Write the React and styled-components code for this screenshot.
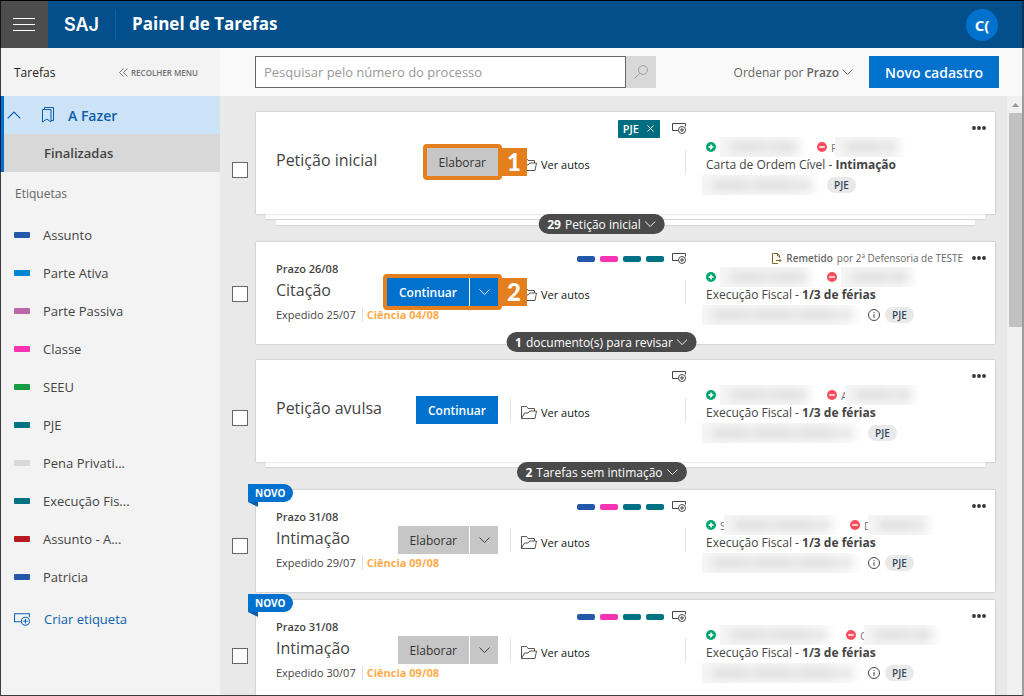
import { useState } from "react";
import styled, { createGlobalStyle, css } from "styled-components";

const GlobalStyle = createGlobalStyle`
  * {
    box-sizing: border-box;
  }
  body {
    margin: 0;
    font-family: "Segoe UI", "Open Sans", "Noto Sans", sans-serif;
    font-size: 13px;
    color: #444;
    background-color: #e9e9e9;
  }
  button, input, select {
    font-family: inherit;
    font-size: inherit;
    color: inherit;
    margin: 0;
    padding: 0;
    border: none;
    border-radius: 0;
    background: none;
  }
  button {
    cursor: pointer;
  }
  a {
    color: inherit;
    text-decoration: none;
  }
  ul {
    list-style: none;
    margin: 0;
    padding: 0;
  }
  svg {
    display: block;
    flex: none;
    fill: none;
    stroke: currentColor;
  }
`;

const Page = styled.div`
  height: 100vh;
  display: flex;
  flex-direction: column;
  overflow: hidden;
  border-top: 1px solid #000;
`;

const Frame = styled.div`
  position: fixed;
  inset: 0;
  z-index: 10;
  pointer-events: none;
  border: 1px solid rgba(0, 0, 0, 0.75);
  border-top: none;
  border-right: 2px solid rgba(0, 0, 0, 0.35);
`;

/* header */

const Header = styled.header`
  flex: none;
  height: 47px;
  display: flex;
  align-items: center;
  background-color: #034f8c;
  color: white;
`;

const MenuButton = styled.button`
  width: 48px;
  align-self: stretch;
  display: flex;
  align-items: center;
  justify-content: center;
  background-color: #4d4d4d;
`;

const Logo = styled.span`
  padding: 0 16px;
  line-height: 30px;
  border-right: 1px solid #0460ab;
  font-family: Inter, "Liberation Sans", sans-serif;
  font-size: 18px;
  font-weight: 600;
`;

const PageTitle = styled.h1`
  flex: 1;
  margin: 0 16px;
  font-size: 17px;
  line-height: 22px;
  padding-bottom: 2px;
  font-weight: 700;
`;

const Avatar = styled.button`
  width: 32px;
  height: 32px;
  margin-right: 26px;
  border-radius: 50%;
  background-color: #0072ce;
  font-size: 15px;
  font-weight: 700;
`;

const Body = styled.div`
  flex: 1;
  min-height: 0;
  display: flex;
`;

/* sidebar */

const Sidebar = styled.nav`
  flex: none;
  width: 220px;
  background-color: #f3f3f3;
`;

const SidebarTop = styled.div`
  height: 48px;
  padding: 0 22px 0 14px;
  display: flex;
  align-items: center;
  justify-content: space-between;
  font-size: 12px;
  color: #222;
`;

const Collapse = styled.button`
  display: flex;
  align-items: center;
  gap: 3px;
  font-size: 8px;
  font-weight: 600;
  color: #707070;
`;

const Group = styled.div`
  border-left: 4px solid #0072ce;
`;

const GroupLink = styled.a`
  height: 38px;
  display: flex;
  align-items: center;
  font-weight: 600;
  ${(props) =>
    props.$active
      ? css`
          padding-left: 3px;
          font-size: 14px;
          color: #0b5cab;
          background-color: #cce3f7;
        `
      : css`
          padding-left: 40px;
          background-color: #d8d8d8;
        `}
`;

const BookmarkSlot = styled.span`
  padding: 0 13px 0 20px;
`;

const SidebarTitle = styled.h2`
  margin: 0;
  padding: 0 15px;
  font-size: 12px;
  font-weight: 400;
  line-height: 44px;
  color: #666;
`;

const LabelItem = styled.li`
  height: 38px;
  padding-left: 14px;
  display: flex;
  align-items: center;
  gap: 13px;
`;

const LabelName = styled.span`
  white-space: nowrap;
`;

const Swatch = styled.span`
  width: 16px;
  height: 6px;
  border-radius: 1px;
  background-color: ${(props) => props.$color};
`;

const CreateLabel = styled.button`
  height: 46px;
  padding-left: 14px;
  display: flex;
  align-items: center;
  gap: 14px;
  color: #0b62b0;
`;

/* toolbar */

const Content = styled.main`
  flex: 1;
  min-width: 0;
  display: flex;
  flex-direction: column;
`;

const Toolbar = styled.div`
  flex: none;
  height: 48px;
  padding: 0 25px 0 35px;
  display: flex;
  align-items: center;
  background-color: #f9f9f9;
`;

const SearchForm = styled.form`
  flex: 0 1 401px;
  height: 32px;
  display: flex;
  margin-right: auto;
`;

const SearchInput = styled.input`
  flex: 1;
  min-width: 0;
  padding: 0 8px;
  border: 1px solid #666;
  background-color: white;
  &::placeholder {
    color: #999;
    opacity: 1;
  }
`;

const SearchButton = styled.button`
  width: 30px;
  display: flex;
  align-items: center;
  justify-content: center;
  color: #a0a0a0;
  background-color: #d8d8d8;
`;

const Sort = styled.label`
  display: flex;
  align-items: center;
  gap: 3px;
  margin-right: 16px;
  font-size: 12px;
  color: #666;
`;

const SortSelect = styled.select`
  appearance: none;
  field-sizing: content;
  font-weight: 600;
`;

const NewButton = styled.button`
  width: 130px;
  height: 32px;
  font-size: 14px;
  font-weight: 600;
  color: white;
  background-color: #0072ce;
`;

/* task list */

const ListArea = styled.div`
  flex: 1;
  min-height: 0;
  display: flex;
`;

const TaskList = styled.ul`
  flex: 1;
  min-width: 0;
  overflow: hidden;
  padding: 16px 12px 0;
`;

const itemMargins = { stack: 28, new: 8 };
const checkMargins = { stack: 14, new: 10 };

const TaskItem = styled.li`
  display: flex;
  align-items: center;
  gap: 8px;
  margin-bottom: ${(props) => itemMargins[props.$kind] || 16}px;
`;

const Check = styled.input`
  appearance: none;
  flex: none;
  width: 16px;
  height: 16px;
  margin-top: ${(props) => checkMargins[props.$kind] || 2}px;
  border: 1px solid #666;
  background-color: white;
  &:checked {
    background-color: #0072ce;
  }
`;

const CardWrap = styled.div`
  position: relative;
  flex: 1;
  min-width: 0;
`;

const Card = styled.article`
  position: relative;
  min-height: 102px;
  padding-bottom: 2px;
  display: grid;
  grid-template-columns: 430px minmax(0, 1fr);
  background-color: white;
  box-shadow: 0 0 2px rgba(0, 0, 0, 0.25);
`;

const Layer = styled.div`
  position: absolute;
  top: calc(100% + ${(props) => (props.$depth - 1) * 6}px);
  left: ${(props) => props.$depth * 10}px;
  right: ${(props) => props.$depth * 10}px;
  height: 5px;
  background-color: white;
  box-shadow: 0 1px 1px rgba(0, 0, 0, 0.08);
`;

const Pill = styled.button`
  position: absolute;
  top: ${(props) => (props.$over ? "calc(100% - 12px)" : "100%")};
  left: calc(50% - 24px);
  transform: translateX(-50%);
  height: 20px;
  padding: 0 9px;
  display: flex;
  align-items: center;
  gap: 4px;
  border-radius: 10px;
  white-space: nowrap;
  font-size: 12px;
  color: white;
  background-color: #4a4a4a;
`;

const NewBadge = styled.span`
  position: absolute;
  top: -6px;
  left: -8px;
  width: 45px;
  line-height: 18px;
  padding-left: 7px;
  border-radius: 0 9px 9px 0;
  font-size: 10px;
  font-weight: 700;
  color: white;
  background-color: #0072ce;
  &::after {
    content: "";
    position: absolute;
    top: 100%;
    left: 0;
    width: 10px;
    height: 5px;
    background-color: #0460ab;
    clip-path: polygon(0 0, 100% 0, 100% 100%);
  }
`;

const Tags = styled.div`
  grid-area: 1 / 1;
  align-self: start;
  height: 26px;
  padding-top: 7px;
  display: flex;
  align-items: center;
  justify-content: flex-end;
  gap: 5px;
`;

const Tag = styled.span`
  width: 18px;
  height: 6px;
  border-radius: 2px;
  background-color: ${(props) => props.$color};
`;

const Chip = styled.button`
  height: 18px;
  padding: 0 6px 0 5px;
  margin-right: 4px;
  display: flex;
  align-items: center;
  gap: 8px;
  border-radius: 1px;
  font-size: 11px;
  font-weight: 600;
  color: white;
  background-color: #006d80;
`;

const AddTag = styled.button`
  margin-left: 3px;
  color: #333;
`;

const Task = styled.div`
  grid-area: 1 / 1;
  padding-left: 20px;
  display: grid;
  grid-template-columns: 222px 1fr;
  gap: 12px;
  align-items: center;
`;

const TaskMain = styled.div`
  display: flex;
  align-items: center;
  justify-content: space-between;
`;

const TaskText = styled.div`
  width: 0;
  white-space: nowrap;
  font-size: 11px;
`;

const Deadline = styled.div`
  line-height: 20px;
  font-weight: 600;
`;

const TaskTitle = styled.h3`
  margin: 0;
  padding-bottom: 4px;
  line-height: 22px;
  font-size: 16px;
  font-weight: 400;
`;

const Dates = styled.div`
  line-height: 20px;
  display: flex;
  align-items: center;
`;

const Science = styled.span`
  margin-left: 6px;
  padding-left: 4px;
  line-height: 14px;
  border-left: 1px solid #ddd;
  font-weight: 700;
  color: #ffab4a;
`;

const Action = styled.div`
  position: relative;
  display: flex;
  gap: 1px;
`;

const ActionButton = styled.button`
  height: 28px;
  padding: 0 12px;
  font-size: 12px;
  display: flex;
  align-items: center;
  ${(props) =>
    props.$primary
      ? css`
          font-weight: 600;
          color: white;
          background-color: #0072ce;
        `
      : css`
          color: #333;
          background-color: #c6c6c6;
        `}
`;

const SplitButton = styled(ActionButton)`
  width: 28px;
  padding: 0;
  justify-content: center;
`;

const Highlight = styled.span`
  position: absolute;
  inset: -4px;
  border: 4px solid #e37f1c;
  border-radius: 4px;
  pointer-events: none;
`;

const Step = styled.span`
  position: absolute;
  left: calc(100% + 3px);
  top: 0;
  z-index: 1;
  width: 26px;
  line-height: 28px;
  text-align: center;
  font-family: Lato, sans-serif;
  font-size: 24px;
  font-weight: 900;
  color: white;
  background-color: #e37f1c;
`;

const Records = styled.div`
  height: 24px;
  padding: 4px 0 0 10px;
  display: flex;
  align-items: center;
  border: solid #e2e2e2;
  border-width: 0 1px;
`;

const RecordsLink = styled.a`
  display: flex;
  align-items: center;
  gap: 4px;
  font-size: 11px;
  color: #111;
`;

const Process = styled.div`
  grid-area: 1 / 2;
  padding: 0 9px 0 20px;
  min-width: 0;
`;

const ProcessTop = styled.div`
  height: 26px;
  padding-top: 6px;
  display: flex;
  align-items: center;
  justify-content: flex-end;
  gap: 9px;
`;

const Sent = styled.span`
  display: flex;
  align-items: center;
  gap: 4px;
  font-size: 10px;
  white-space: nowrap;
  color: #666;
`;

const SentState = styled.span`
  font-weight: 600;
`;

const MoreButton = styled.button`
  display: flex;
  color: #333;
`;

const Parties = styled.div`
  height: 18px;
  display: flex;
  align-items: center;
`;

const Party = styled.span`
  display: flex;
  align-items: center;
  margin-right: 9px;
`;

const Initial = styled.span`
  width: ${(props) => (props.children ? 8 : 3)}px;
  padding-left: 4px;
  font-size: 11px;
  color: #777;
`;

const Redacted = styled.span`
  position: relative;
  width: ${(props) => props.$width}px;
  height: 20px;
  overflow: hidden;
  background: linear-gradient(to right, #f5f5f5 75%, transparent);
  &::after {
    content: "";
    position: absolute;
    inset: 6px 10px;
    border-radius: 4px;
    background: repeating-linear-gradient(90deg, #dadada 0 30px, #e4e4e4 38px 44px);
    filter: blur(5px);
  }
`;

const ProcessClass = styled.div`
  line-height: 18px;
  font-size: 12px;
  white-space: nowrap;
`;

const ProcessNumber = styled.div`
  height: 22px;
  display: flex;
  align-items: center;
  gap: 5px;
  margin-left: -4px;
`;

const System = styled.span`
  padding: 0 7px;
  border-radius: 8px;
  line-height: 16px;
  font-size: 10px;
  font-weight: 600;
  color: #34495e;
  background-color: #e9e9e9;
`;

const Scrollbar = styled.div`
  width: 17px;
  padding: 6px 2px 0;
  background-color: #f0f0f0;
`;

const ScrollThumb = styled.div`
  height: 36%;
  margin-top: 6px;
  background-color: #c1c1c1;
`;

/* icons */

const Chevron = ({ width = 11, up }) => (
  <svg width={width} height={width / 2 + 1} viewBox="0 0 12 7">
    <path d={up ? "M.5 6.5 6 1l5.5 5.5" : "M.5.5 6 6 11.5.5"} />
  </svg>
);

const MenuIcon = () => (
  <svg width="22" height="15" viewBox="0 0 22 15">
    <path d="M0 1.500h22M0 7.500h22M0 13.500h22" strokeWidth="1.200" />
  </svg>
);

const CollapseIcon = () => (
  <svg width="9" height="9" viewBox="0 0 9 9">
    <path d="M4.500.500l-4 4 4 4M8.500.500l-4 4 4 4" />
  </svg>
);

const BookmarkIcon = () => (
  <svg width="14" height="16" viewBox="0 0 14 16">
    <path d="M1.500 2.500h8.500V15l-4.200-3-4.300 3zM3.500 2.500v-2h9v13h-2.500" />
  </svg>
);

const TagIcon = ({ width = 14 }) => (
  <svg width={width} height={width === 14 ? 11 : 13} viewBox="0 0 14 11">
    <path d="M6 7.500H.5V.5h13v3" strokeWidth="0.900" />
    <circle cx="10" cy="7" r="3.500" strokeWidth="0.900" />
    <path d="M8 7h4M10 5v4" strokeWidth="0.900" />
  </svg>
);

const SearchIcon = () => (
  <svg width="14" height="14" viewBox="0 0 14 14">
    <circle cx="9" cy="5" r="4.500" />
    <path d="M5.800 8.200.500 13.500" />
  </svg>
);

const FolderIcon = () => (
  <svg width="16" height="13" viewBox="0 0 16 13">
    <path
      stroke="#444"
      strokeWidth="0.900"
      d="M.5 12.500V.5h5l1.500 2h6.500V5M.5 12.500l3-5.500h3.500L8.500 5h7l-1.500 7.500z"
    />
  </svg>
);

const DocumentIcon = () => (
  <svg width="10" height="11" viewBox="0 0 10 11">
    <path
      stroke="#80672a"
      d="M6 10.500H.5V.5h5l2 2v2.500M5.500.500v2.500h2M4 7.500h5M7.500 6 9 7.500 7.500 9"
    />
  </svg>
);

const MoreIcon = () => (
  <svg width="14" height="4" viewBox="0 0 14 4">
    <g fill="currentColor" stroke="none">
      <circle cx="2" cy="2" r="1.900" />
      <circle cx="7" cy="2" r="1.900" />
      <circle cx="12" cy="2" r="1.900" />
    </g>
  </svg>
);

const PartyIcon = ({ plus }) => (
  <svg width="10" height="10" viewBox="0 0 10 10">
    <circle cx="5" cy="5" r="5" fill={plus ? "#00a76d" : "#ff4d5e"} stroke="none" />
    <path stroke="white" strokeWidth="1.500" d={plus ? "M2.500 5h5M5 2.500v5" : "M2.200 5h5.600"} />
  </svg>
);

const InfoIcon = () => (
  <svg width="12" height="12" viewBox="0 0 12 12">
    <circle cx="6" cy="6" r="5.500" />
    <path d="M6 5v4M6 3v1" />
  </svg>
);

const CloseIcon = () => (
  <svg width="7" height="7" viewBox="0 0 7 7">
    <path d="M.5.500l6 6M6.500.500l-6 6" />
  </svg>
);

/* data */

const blue = "#2459a9";
const pink = "#f733b2";
const teal = "#007283";

const labels = [
  { name: "Assunto", color: blue },
  { name: "Parte Ativa", color: "#0087d3" },
  { name: "Parte Passiva", color: "#bc67a9" },
  { name: "Classe", color: pink },
  { name: "SEEU", color: "#149b44" },
  { name: "PJE", color: teal },
  { name: "Pena Privati...", color: "#d8d8d8" },
  { name: "Execução Fis...", color: teal },
  { name: "Assunto - A...", color: "#b81b1f" },
  { name: "Patricia", color: blue },
];

const tags = [blue, pink, teal, teal];

const tasks = [
  {
    id: 1,
    kind: "stack",
    layers: [2, 1],
    title: "Petição inicial",
    action: "Elaborar",
    step: 1,
    chip: "PJE",
    parties: [{ width: 88 }, { initial: "P", width: 72 }],
    process: "Carta de Ordem Cível",
    subject: "Intimação",
    numberWidth: 120,
    more: { count: 29, text: "Petição inicial" },
  },
  {
    id: 2,
    title: "Citação",
    deadline: "26/08",
    sent: "25/07",
    science: "04/08",
    action: "Continuar",
    primary: true,
    split: true,
    step: 2,
    tags,
    from: "por 2ª Defensoria de TESTE",
    parties: [{ width: 98 }, { width: 78 }],
    process: "Execução Fiscal",
    subject: "1/3 de férias",
    numberWidth: 161,
    info: true,
    more: { count: 1, text: "documento(s) para revisar", over: true },
  },
  {
    id: 3,
    kind: "stack",
    layers: [1],
    title: "Petição avulsa",
    action: "Continuar",
    primary: true,
    parties: [{ width: 98 }, { initial: "A", width: 76 }],
    process: "Execução Fiscal",
    subject: "1/3 de férias",
    numberWidth: 161,
    more: { count: 2, text: "Tarefas sem intimação" },
  },
  {
    id: 4,
    kind: "new",
    title: "Intimação",
    deadline: "31/08",
    sent: "29/07",
    science: "09/08",
    action: "Elaborar",
    split: true,
    tags,
    parties: [{ initial: "S", width: 117 }, { initial: "D", width: 68 }],
    process: "Execução Fiscal",
    subject: "1/3 de férias",
    numberWidth: 161,
    info: true,
  },
  {
    id: 5,
    kind: "new",
    title: "Intimação",
    deadline: "31/08",
    sent: "30/07",
    science: "09/08",
    action: "Elaborar",
    split: true,
    tags,
    parties: [{ width: 117 }, { initial: "C", width: 78 }],
    process: "Execução Fiscal",
    subject: "1/3 de férias",
    numberWidth: 161,
    info: true,
  },
];

const TaskCard = ({ task }) => (
  <TaskItem $kind={task.kind}>
    <Check type="checkbox" aria-label={task.title} $kind={task.kind} />
    <CardWrap>
      {task.layers?.map((depth) => (
        <Layer key={depth} $depth={depth} />
      ))}
      <Card>
        {task.kind === "new" && <NewBadge>NOVO</NewBadge>}
        <Task>
          <TaskMain>
            <TaskText>
              {task.deadline && <Deadline>Prazo {task.deadline}</Deadline>}
              <TaskTitle>{task.title}</TaskTitle>
              {task.sent && (
                <Dates>
                  Expedido {task.sent}
                  <Science>Ciência {task.science}</Science>
                </Dates>
              )}
            </TaskText>
            <Action>
              <ActionButton $primary={task.primary}>{task.action}</ActionButton>
              {task.split && (
                <SplitButton $primary={task.primary} aria-label="Mais ações">
                  <Chevron />
                </SplitButton>
              )}
              {task.step && <Highlight />}
              {task.step && <Step>{task.step}</Step>}
            </Action>
          </TaskMain>
          <Records>
            <RecordsLink href="#autos">
              <FolderIcon />
              Ver autos
            </RecordsLink>
          </Records>
        </Task>
        <Tags>
          {task.chip && (
            <Chip>
              {task.chip}
              <CloseIcon />
            </Chip>
          )}
          {task.tags?.map((color, i) => (
            <Tag key={i} $color={color} />
          ))}
          <AddTag aria-label="Adicionar etiqueta">
            <TagIcon />
          </AddTag>
        </Tags>
        <Process>
          <ProcessTop>
            {task.from && (
              <Sent>
                <DocumentIcon />
                <SentState>Remetido</SentState>
                {task.from}
              </Sent>
            )}
            <MoreButton aria-label="Opções">
              <MoreIcon />
            </MoreButton>
          </ProcessTop>
          <Parties>
            {task.parties.map((party, i) => (
              <Party key={i}>
                <PartyIcon plus={i === 0} />
                <Initial>{party.initial}</Initial>
                <Redacted $width={party.width} />
              </Party>
            ))}
          </Parties>
          <ProcessClass>
            {task.process} - <b>{task.subject}</b>
          </ProcessClass>
          <ProcessNumber>
            <Redacted $width={task.numberWidth} />
            {task.info && <InfoIcon />}
            <System>PJE</System>
          </ProcessNumber>
        </Process>
      </Card>
      {task.more && (
        <Pill $over={task.more.over}>
          <b>{task.more.count}</b>
          {task.more.text}
          <Chevron />
        </Pill>
      )}
    </CardWrap>
  </TaskItem>
);

const App = () => {
  const [search, setSearch] = useState("");

  return (
    <Page>
      <GlobalStyle />
      <Header>
        <MenuButton aria-label="Menu">
          <MenuIcon />
        </MenuButton>
        <Logo>SAJ</Logo>
        <PageTitle>Painel de Tarefas</PageTitle>
        <Avatar>C(</Avatar>
      </Header>
      <Body>
        <Sidebar>
          <SidebarTop>
            Tarefas
            <Collapse>
              <CollapseIcon />
              RECOLHER MENU
            </Collapse>
          </SidebarTop>
          <Group>
            <GroupLink href="#fazer" $active>
              <Chevron width={14} up />
              <BookmarkSlot>
                <BookmarkIcon />
              </BookmarkSlot>
              A Fazer
            </GroupLink>
            <GroupLink href="#finalizadas">Finalizadas</GroupLink>
          </Group>
          <SidebarTitle>Etiquetas</SidebarTitle>
          <ul>
            {labels.map((label) => (
              <LabelItem key={label.name}>
                <Swatch $color={label.color} />
                <LabelName>{label.name}</LabelName>
              </LabelItem>
            ))}
          </ul>
          <CreateLabel>
            <TagIcon width={16} />
            Criar etiqueta
          </CreateLabel>
        </Sidebar>
        <Content>
          <Toolbar>
            <SearchForm>
              <SearchInput
                aria-label="Pesquisar"
                placeholder="Pesquisar pelo número do processo"
                value={search}
                onChange={(e) => setSearch(e.target.value)}
              />
              <SearchButton type="button" aria-label="Buscar">
                <SearchIcon />
              </SearchButton>
            </SearchForm>
            <Sort>
              Ordenar por
              <SortSelect defaultValue="Prazo">
                <option>Prazo</option>
              </SortSelect>
              <Chevron />
            </Sort>
            <NewButton>Novo cadastro</NewButton>
          </Toolbar>
          <ListArea>
            <TaskList>
              {tasks.map((task) => (
                <TaskCard key={task.id} task={task} />
              ))}
            </TaskList>
            <Scrollbar>
              <svg width="13" height="5" viewBox="0 0 13 5">
                <path d="M3 5l3.500-4L10 5z" fill="#999" stroke="none" />
              </svg>
              <ScrollThumb />
            </Scrollbar>
          </ListArea>
        </Content>
      </Body>
      <Frame />
    </Page>
  );
};

export default App;
